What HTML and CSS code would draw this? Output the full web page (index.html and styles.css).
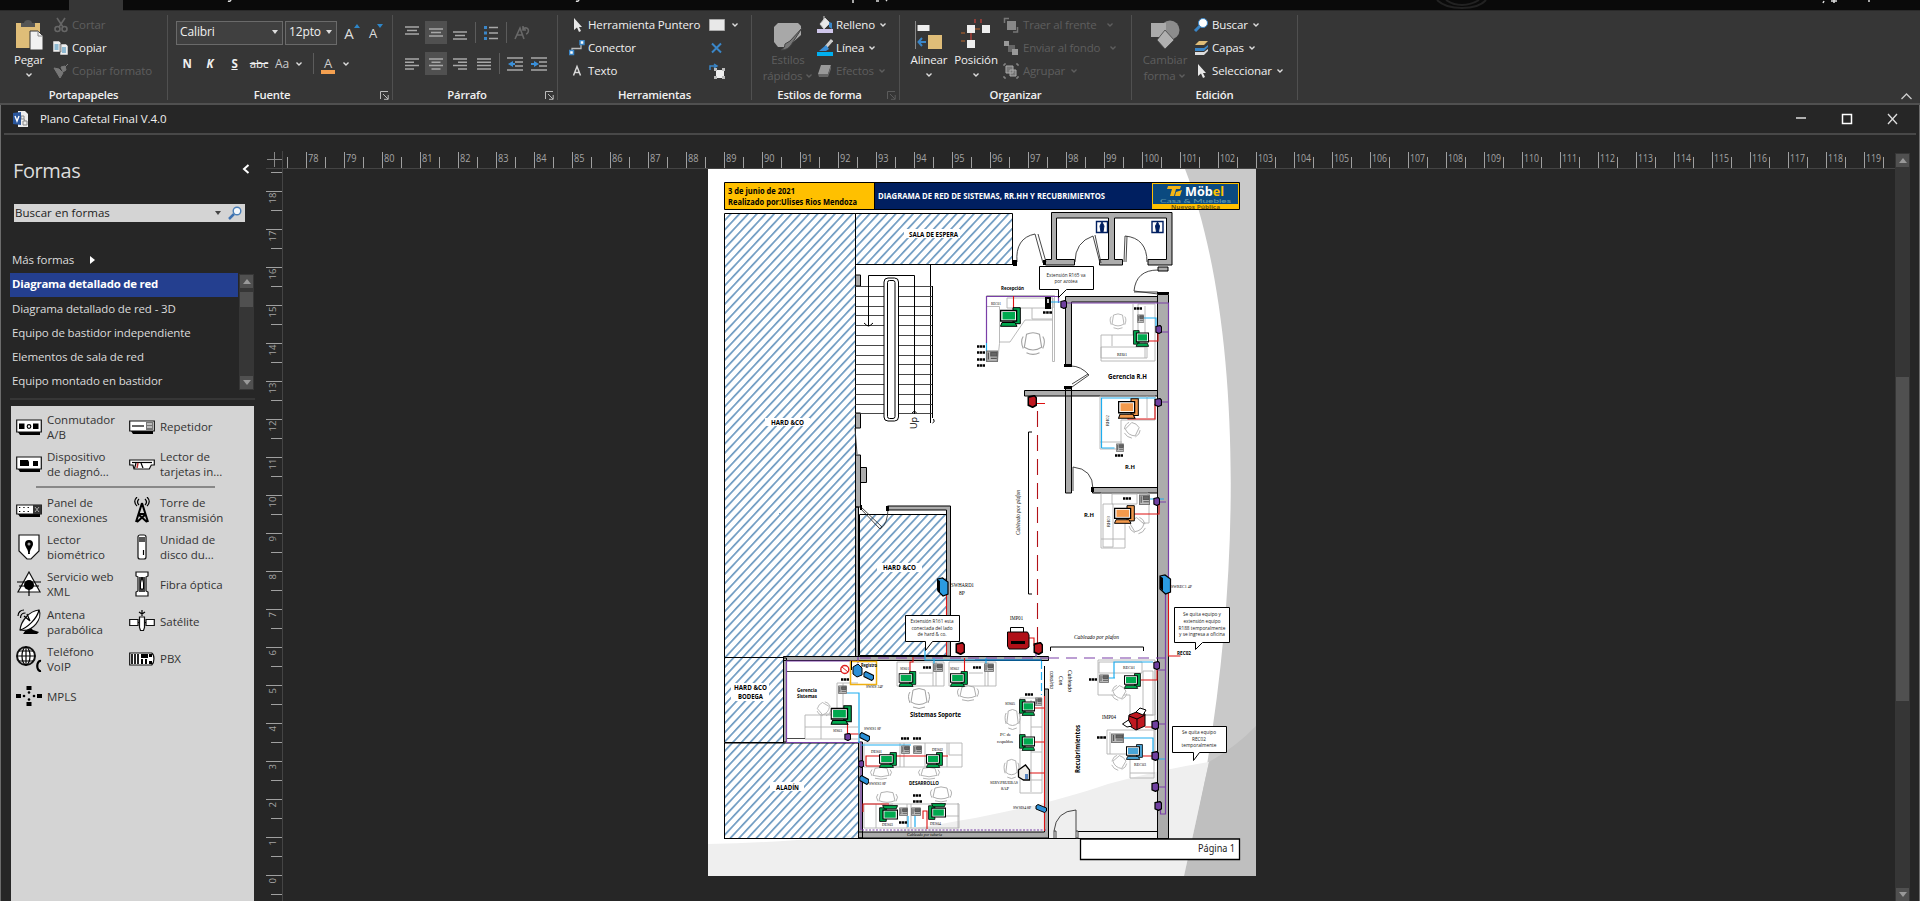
FILE: index.html
```html
<!DOCTYPE html>
<html lang="es">
<head>
<meta charset="utf-8">
<title>Plano Cafetal Final V.4.0</title>
<link rel="stylesheet" href="styles.css">
</head>
<body>
<svg class="defs" width="0" height="0">
  <defs>
    <symbol id="chev" viewBox="0 0 8 8"><path d="M1.5 2.5 4 5 6.500 2.500" fill="none" stroke="currentColor" stroke-width="1.400"/></symbol>
    <symbol id="launch" viewBox="0 0 9 9"><path d="M.5 8V.5H8M3 3l5 5M8.200 4v4.300H4" fill="none" stroke="currentColor"/></symbol>
    <symbol id="cursor" viewBox="0 0 16 16"><path d="M5 1v12l3-2.500 2 4.500 2-1-2-4h3z" fill="#e8e8e8"/></symbol>
  </defs>
</svg>

<div class="app">
  <div class="tabs">
    <div class="tab-on"></div>
    <svg class="tab-bits" width="1797" height="10" viewBox="123 0 1797 10"><path d="M228 1q2 1 3-1M576 1q2 1 3-1M853 0v3M876 1h3M886 0l1 1M1823 3l1-2M1834 0v3M1831 1h6M1869 0v2" stroke="#ddd" stroke-width="1.500" fill="none"/><path d="M1437 0q8 8 25 8t24-8M1446 0q7 5 16 5t17-5" stroke="#222" stroke-width="2" fill="none"/></svg>
  </div>

  <div class="ribbon">
    <section class="group g-clip">
      <div class="body">
        <div class="big">
          <svg width="30" height="34" viewBox="0 0 30 34"><path d="M2 5h24v25H2z" fill="#dfbd78"/><path d="M7 9V5h3c0-4 8-4 8 0h3v4z" fill="#555"/><path d="M16 13h8l5 5v14H16z" fill="#f1f1f1" stroke="#363636"/><path d="M24 13v5h5" fill="none" stroke="#888"/></svg>
          <span>Pegar</span><svg class="chev"><use href="#chev"/></svg>
        </div>
        <div class="rows">
          <div class="row off"><svg width="16" height="16" viewBox="0 0 16 16" fill="none" stroke="#666" stroke-width="1.600"><path d="M4 1l6 9M12 1 6 10"/><circle cx="4.500" cy="12" r="2.500"/><circle cx="11.500" cy="12" r="2.500"/></svg><span>Cortar</span></div>
          <div class="row"><svg width="16" height="16" viewBox="0 0 16 16"><path d="M0 1h6l2 2v9H0zM7 4h6l2 2v9H7z" fill="#eee" stroke="#363636" stroke-width=".5"/><path d="M1.500 5h4M1.500 7h4M1.500 9h4M9 8h4M9 10h4M9 12h4" stroke="#2e86b8"/></svg><span>Copiar</span></div>
          <div class="row off"><svg width="16" height="16" viewBox="0 0 16 16"><path d="M1 5l5 1 4 4-3 5zM8 4l4-1 1 4-3 2zM12 4l3-3" fill="#777" stroke="#777"/></svg><span>Copiar formato</span></div>
        </div>
      </div>
      <div class="label"><span>Portapapeles</span></div>
    </section>

    <section class="group g-font">
      <div class="body tools">
        <div class="tool-row">
          <div class="combo c1"><span>Calibri</span><i></i></div>
          <div class="combo c2"><span>12pto</span><i></i></div>
          <div class="cell w26 fa">A<svg width="6" height="5" viewBox="0 0 6 5"><path d="M0 4l3-4 3 4z" fill="#2e86c8"/></svg></div>
          <div class="cell w22 fb">A<svg width="6" height="5" viewBox="0 0 6 5"><path d="M0 0h6l-3 4z" fill="#2e86c8"/></svg></div>
        </div>
        <div class="tool-row">
          <div class="cell w22"><b>N</b></div><div class="cell w24"><b><em>K</em></b></div><div class="cell w25"><b><u>S</u></b></div>
          <div class="cell w24"><s>abc</s></div><div class="cell w22 gr">Aa</div><div class="cell w12"><svg class="chev"><use href="#chev"/></svg></div>
          <div class="cell w16"><div class="vsep"></div></div>
          <div class="cell w14 fcol">A</div><div class="cell w22"><svg class="chev"><use href="#chev"/></svg></div>
        </div>
      </div>
      <div class="label"><span>Fuente</span><svg class="la"><use href="#launch"/></svg></div>
    </section>

    <section class="group g-par">
      <div class="body tools">
        <div class="tool-row">
          <div class="cell w22"><svg width="14" height="14" viewBox="0 0 14 14" class="ln"><path d="M0 1h14M2 4.500h10M0 8h14"/></svg></div>
          <div class="cell w22 sel gap2"><svg width="14" height="14" viewBox="0 0 14 14" class="ln"><path d="M0 3h14M2 6.500h10M0 10h14"/></svg></div>
          <div class="cell w26"><svg width="14" height="14" viewBox="0 0 14 14" class="ln"><path d="M0 6h14M2 9.500h10M0 13h14"/></svg></div>
          <div class="cell w5"><div class="vsep"></div></div>
          <div class="cell w26"><svg width="14" height="16" viewBox="0 0 14 16"><path d="M5 2.500h9M5 8h9M5 13.500h9" stroke="#a8a8a8" stroke-width="1.600"/><path d="M0 1h3v3H0zM0 6.500h3v3H0zM0 12h3v3H0z" fill="#3a86c8"/></svg></div>
          <div class="cell w5"><div class="vsep"></div></div>
          <div class="cell w26"><svg width="16" height="16" viewBox="0 0 16 16" fill="none" stroke="#686868" stroke-width="1.600"><path d="M1 14 6 3l4 11M3 10h6M9 4c6-4 7 4 3 5M9 1v4h3"/></svg></div>
        </div>
        <div class="tool-row">
          <div class="cell w22"><svg width="14" height="12" viewBox="0 0 14 12" class="ln"><path d="M0 1h14M0 4.300h9M0 7.600h14M0 11h9"/></svg></div>
          <div class="cell w22 sel gap2"><svg width="14" height="12" viewBox="0 0 14 12" class="ln"><path d="M0 1h14M2.500 4.300h9M0 7.600h14M2.500 11h9"/></svg></div>
          <div class="cell w26"><svg width="14" height="12" viewBox="0 0 14 12" class="ln"><path d="M0 1h14M5 4.300h9M0 7.600h14M5 11h9"/></svg></div>
          <div class="cell w22"><svg width="14" height="12" viewBox="0 0 14 12" class="ln"><path d="M0 1h14M0 4.300h14M0 7.600h14M0 11h14"/></svg></div>
          <div class="cell w8"><div class="vsep"></div></div>
          <div class="cell w24"><svg width="16" height="14" viewBox="0 0 16 14"><path d="M0 1h16M8 5h8M8 9h8M0 13h16" stroke="#a8a8a8" stroke-width="1.600"/><path d="M6 4v2h2v2H6v2L1 7z" fill="#3a8fd8"/></svg></div>
          <div class="cell w24"><svg width="16" height="14" viewBox="0 0 16 14"><path d="M0 1h16M8 5h8M8 9h8M0 13h16" stroke="#a8a8a8" stroke-width="1.600"/><path d="M3 4v2H0v2h3v2l5-3z" fill="#3a8fd8"/></svg></div>
        </div>
      </div>
      <div class="label"><span>Párrafo</span><svg class="la"><use href="#launch"/></svg></div>
    </section>

    <section class="group g-tools">
      <div class="body">
        <div class="rows r132">
          <div class="row"><svg width="16" height="16"><use href="#cursor"/></svg><span>Herramienta Puntero</span></div>
          <div class="row"><svg width="16" height="16" viewBox="0 0 16 16"><path d="M3 12V8.500h9V4" fill="none" stroke="#bbb" stroke-width="1.300"/><path d="M.5 10.500h4v4h-4zM11 .5h4v4h-4z" fill="#fff" stroke="#3a86c8" stroke-width="1.500"/></svg><span>Conector</span></div>
          <div class="row"><svg width="16" height="16" viewBox="0 0 16 16"><path d="M4.500 12.500 8 3.500l3.500 9M5.800 9.500h4.400" fill="none" stroke="#d8d8d8" stroke-width="1.500"/></svg><span>Texto</span></div>
        </div>
        <div class="rows pick">
          <div class="row"><svg width="16" height="12" viewBox="0 0 16 12"><path d="M.5.500h15v11H.5z" fill="#e8e8e8" stroke="#aaa"/></svg><svg class="chev sp"><use href="#chev"/></svg></div>
          <div class="row"><svg width="16" height="14" viewBox="0 0 16 14"><path d="M3 2.500l9 9M12 2.500l-9 9" stroke="#3a86c8" stroke-width="2"/></svg></div>
          <div class="row"><svg width="16" height="16" viewBox="0 0 16 16"><path d="M1 7V3h6M5 1l3 2-3 2" fill="none" stroke="#3a86c8" stroke-width="1.500"/><path d="M7 7h8v8H7z" fill="#eee"/><path d="M5 5h3v3H5zM13 5h3v3h-3zM5 13h3v3H5zM13 13h3v3h-3z" fill="#bbb"/></svg></div>
        </div>
      </div>
      <div class="label"><span>Herramientas</span></div>
    </section>

    <section class="group g-style">
      <div class="body">
        <div class="big off">
          <svg width="30" height="34" viewBox="0 0 30 34"><path d="M5 5h20l3 3v9L18 26l-6 3H5l-4-5V9z" fill="#a8a8a8"/><path d="M29 10 18 27q-3 5-10 5 5-3 4-6l5-3z" fill="#777" stroke="#444"/></svg>
          <span>Estilos</span><span class="l2">rápidos <svg class="chev"><use href="#chev"/></svg></span>
        </div>
        <div class="rows">
          <div class="row"><svg width="16" height="18" viewBox="0 0 16 18"><path d="M3 8l5-6 5 5-6 6zM7 4V0" fill="#e8e8e8" stroke="#ccc"/><path d="M12 6l3 1v6l-3-2z" fill="#3a86c8"/><path d="M0 13h16v4H0z" fill="#cfc6ea"/></svg><span>Relleno</span><svg class="chev"><use href="#chev"/></svg></div>
          <div class="row"><svg width="16" height="18" viewBox="0 0 16 18"><path d="M15 1 9 8" stroke="#ccc" stroke-width="3"/><path d="M2 12 9 6l3 4-3 2z" fill="#3a8fd8"/><path d="M0 13h16v4H0z" fill="#00b0f0"/></svg><span>Línea</span><svg class="chev"><use href="#chev"/></svg></div>
          <div class="row off"><svg width="16" height="16" viewBox="0 0 16 16"><path d="M4 2h10l-3 9H1z" fill="#999"/><path d="M14 2v4l-3 8v-3zM1 11h10v3H2z" fill="#666"/></svg><span>Efectos</span><svg class="chev"><use href="#chev"/></svg></div>
        </div>
      </div>
      <div class="label"><span>Estilos de forma</span><svg class="la off"><use href="#launch"/></svg></div>
    </section>

    <section class="group g-org">
      <div class="body">
        <div class="big b44">
          <svg width="30" height="34" viewBox="0 0 30 34"><path d="M1.500 3v28" stroke="#888"/><path d="M3.500 7h12v6h-12z" fill="#eee"/><path d="M14 17h14v14H14z" fill="#dfbd78"/><path d="M12 24H6M8 20l-3.500 4L8 28" stroke="#3a86c8" stroke-width="2" fill="none"/></svg>
          <span>Alinear</span><svg class="chev"><use href="#chev"/></svg>
        </div>
        <div class="big b50">
          <svg width="30" height="34" viewBox="0 0 30 34"><path d="M14 1v4M20 1v4M10 15v8" stroke="#e0443c"/><path d="M13 11h6M0 15h4M0 23h4" stroke="#b8642c"/><path d="M6 7h8v8H6zM21 7h8v8h-8zM6 22h8v8H6z" fill="#eee"/></svg>
          <span>Posición</span><svg class="chev"><use href="#chev"/></svg>
        </div>
        <div class="rows g4">
          <div class="row off"><svg width="16" height="16" viewBox="0 0 16 16"><path d="M4 4h9v9H4z" fill="#888"/><path d="M1.500 6V1.500H6M10 15h4.500v-5" fill="none" stroke="#777" stroke-width="1.500"/></svg><span>Traer al frente</span><svg class="chev far"><use href="#chev"/></svg></div>
          <div class="row off"><svg width="16" height="16" viewBox="0 0 16 16"><path d="M5 5h7v7H5z" fill="#666"/><path d="M1 1h5v5H1zM9 9h6v6H9z" fill="#999"/></svg><span>Enviar al fondo</span><svg class="chev far"><use href="#chev"/></svg></div>
          <div class="row off"><svg width="16" height="16" viewBox="0 0 16 16"><path d="M3 3h7v7H3zM7 7h6v6H7z" fill="#777" stroke="#aaa"/><path d="M1 3V1h2M13 1h2v2M15 13v2h-2M3 15H1v-2" fill="none" stroke="#999"/></svg><span>Agrupar</span><svg class="chev"><use href="#chev"/></svg></div>
        </div>
      </div>
      <div class="label"><span>Organizar</span></div>
    </section>

    <section class="group g-edit">
      <div class="body">
        <div class="big off">
          <svg width="30" height="34" viewBox="0 0 30 34"><circle cx="20" cy="12" r="9.500" fill="#8c8c8c"/><path d="M1 5h15v14H1z" fill="#aaa"/><path d="M15 12l9 10-9 9-8-9z" fill="#b0b0b0" stroke="#444" stroke-width=".8"/></svg>
          <span>Cambiar</span><span class="l2">forma <svg class="chev"><use href="#chev"/></svg></span>
        </div>
        <div class="rows">
          <div class="row"><svg width="16" height="16" viewBox="0 0 16 16"><path d="M2 14l5-5" stroke="#3a86c8" stroke-width="3"/><circle cx="10" cy="6" r="4.500" fill="#fff" stroke="#3a86c8"/></svg><span>Buscar</span><svg class="chev"><use href="#chev"/></svg></div>
          <div class="row"><svg width="16" height="16" viewBox="0 0 16 16"><path d="M6 1h9l-4 4H2z" fill="#dfbd78"/><path d="M2 8h9l4-3v2l-4 4H2z" fill="#3a86c8"/><path d="M2 12h9l4-3v2l-4 4H2z" fill="#ddd"/></svg><span>Capas</span><svg class="chev"><use href="#chev"/></svg></div>
          <div class="row"><svg width="16" height="16"><use href="#cursor"/></svg><span>Seleccionar</span><svg class="chev"><use href="#chev"/></svg></div>
        </div>
      </div>
      <div class="label"><span>Edición</span></div>
    </section>
    <svg class="collapse" width="11" height="7" viewBox="0 0 11 7"><path d="M.5 6 5.500 1l5 5" fill="none" stroke="#ccc" stroke-width="1.300"/></svg>
  </div>

  <div class="doc">
    <div class="titlebar">
      <svg width="16" height="16" viewBox="0 0 16 16"><path d="M5 0h7l3 3v13H5z" fill="#eee"/><path d="M8 5h3v3H8zM10 10h4v4h-4zM11 8l1 2" fill="none" stroke="#888"/><path d="M0 2l8-1v13l-8-1z" fill="#2a569c"/><path d="M2 5l2 5 2-5" fill="none" stroke="#fff" stroke-width="1.400"/></svg>
      <span>Plano Cafetal Final V.4.0</span>
      <svg class="winbtns" width="104" height="14" viewBox="0 0 104 14" fill="none" stroke="#ddd" stroke-width="1.300"><path d="M1 6h10M93 2l9 10M102 2l-9 10"/><path d="M47.500 2.500h9v9h-9z" stroke="#fff" stroke-width="1.500"/></svg>
    </div>

    <div class="main">
      <aside class="side">
        <div class="side-head"><h1>Formas</h1><svg width="8" height="10" viewBox="0 0 8 10"><path d="M6.500 1 2 5l4.500 4" fill="none" stroke="#fff" stroke-width="2"/></svg></div>
        <div class="search"><span>Buscar en formas</span><i></i><svg width="14" height="14" viewBox="0 0 14 14"><path d="M1 13l5-5" stroke="#3f72b0" stroke-width="2.500"/><circle cx="9" cy="5" r="3.800" fill="#f4f8fc" stroke="#4a7fb8" stroke-width="1.400"/></svg></div>
        <div class="more">Más formas<svg width="5" height="8" viewBox="0 0 5 8"><path d="M0 0l5 4-5 4z" fill="#fff"/></svg></div>
        <div class="stencils">
          <ul>
            <li class="on">Diagrama detallado de red</li><li>Diagrama detallado de red - 3D</li><li>Equipo de bastidor independiente</li><li>Elementos de sala de red</li><li>Equipo montado en bastidor</li>
          </ul>
          <div class="sbar small"><b class="up"></b><em></em><b class="dn"></b></div>
        </div>
        <div class="shapes">
          <div class="shape-grid top">
            <div class="shape"><svg viewBox="0 0 26 26"><path d="M2 18h22v3H4z"/><path d="M.7 6h24.600v12H.7z" class="w"/><path d="M3 9.500h5.500v5.500H3zM17 9.500h5.500v5.500H17z"/><circle cx="13" cy="12.500" r="1.800" class="n"/></svg><span>Conmutador<br>A/B</span></div>
            <div class="shape"><svg viewBox="0 0 26 26"><path d="M2 17h22v3H4z"/><path d="M.7 7h24.600v10H.7z" class="w"/><path d="M3 12h12" class="n"/><path d="M17 8h7v8h-7z" fill="#777"/><path d="M18 10h5M18 13h5" stroke="#fff"/></svg><span>Repetidor</span></div>
            <div class="shape"><svg viewBox="0 0 26 26"><path d="M2 18h22v3H4z"/><path d="M.7 6h24.600v12H.7z" class="w"/><path d="M4 9h8l1 2v4H4zM17 10h5v5h-5z"/></svg><span>Dispositivo<br>de diagnó...</span></div>
            <div class="shape"><svg viewBox="0 0 26 26"><path d="M.7 9h24.600v5h-3l-2 4H5l-1-4H.7z" class="w"/><path d="M3 11.500h20" class="n"/><path d="M7 12l-1.500 5.500M12 12l2 5" class="n"/><path d="M9 12l-1 5" stroke="#b33" stroke-width="1.500"/></svg><span>Lector de<br>tarjetas in...</span></div>
          </div>
          <hr>
          <div class="shape-grid">
            <div class="shape"><svg viewBox="0 0 26 26"><path d="M2 17h22v3H4z"/><path d="M.7 8h24.600v9H.7z" class="w"/><path d="M3 10.500h12M3 14.500h12" class="n" stroke-dasharray="1.300 3"/><path d="M17 8h8v9h-8z" fill="#333"/><path d="M19 10l4 5M23 10l-4 5" stroke="#aaa"/></svg><span>Panel de<br>conexiones</span></div>
            <div class="shape"><svg viewBox="0 0 26 26"><path d="M13 6 7 25M13 6l6 19M9 17h8M8 25l9-8M18 25l-9-8" fill="none" stroke="#000" stroke-width="2"/><path d="M10 8c-2-2-2-4 0-6M16 8c2-2 2-4 0-6M8 9C5 6 5 3 8 0M18 9c3-3 3-6 0-9" class="n"/></svg><span>Torre de<br>transmisión</span></div>
            <div class="shape"><svg viewBox="0 0 26 26"><path d="M3 1h20v16L15 25h-4L3 17z" class="w"/><path d="M13 6a4 4 0 0 1 4 4c0 3-4 6-3 10h-2c1-4-3-7-3-10a4 4 0 0 1 4-4z"/><circle cx="13" cy="10" r="1.500" fill="#999"/></svg><span>Lector<br>biométrico</span></div>
            <div class="shape"><svg viewBox="0 0 26 26"><rect x="9" y="1" width="8" height="24" rx="2" class="w"/><path d="M10 3h6v5h-6z" fill="#555"/><path d="M14.500 16v5" class="n"/></svg><span>Unidad de<br>disco du...</span></div>
            <div class="shape"><svg viewBox="0 0 26 26"><path d="M13 1 24 21H2z" class="w"/><circle cx="13" cy="14" r="5"/><path d="M1 11h24M3 15h20M13 18v7" class="n"/></svg><span>Servicio web<br>XML</span></div>
            <div class="shape"><svg viewBox="0 0 26 26"><path d="M7 1h12v4l-2 1v14l2 1v4H7v-4l2-1V6L7 5z" class="w"/><path d="M10 6h6v15h-6z" fill="#444"/><path d="M13 6l1.500 6v6H11.500v-6z" fill="#fff" stroke="#000"/></svg><span>Fibra óptica</span></div>
            <div class="shape"><svg viewBox="0 0 26 26"><path d="M7 25h14l2-2-6-2-3-3-5 4z"/><path d="M23 1c4 8-6 23-19 20 1-9 9-19 19-20z" class="w"/><path d="M4 21C11 19 21 10 23 1M14 12 8 7M14 12 11 5M2 7c0-4 3-6 6-6M4.500 9c0-3 2-5 5-5" class="n"/></svg><span>Antena<br>parabólica</span></div>
            <div class="shape"><svg viewBox="0 0 26 26"><path d="M.7 10.500h8.300v6H.7zM17 10.500h8.300v6H17z" class="w"/><path d="M9 13.500h8" class="n"/><path d="M10.500 8h5v10.500l-1 3h-3l-1-3z" class="w"/><path d="M10 3l3 2 3-2M13 1v6" class="n"/></svg><span>Satélite</span></div>
            <div class="shape"><svg viewBox="0 0 26 26"><circle cx="10" cy="10" r="9" class="w thick"/><ellipse cx="10" cy="10" rx="4" ry="9" class="n"/><path d="M1 10h18M10 1v18M3 5h14M3 15h14" class="n"/><path d="M25 15c-5-1-5 11 0 10" fill="none" stroke="#000" stroke-width="2.200"/></svg><span>Teléfono<br>VoIP</span></div>
            <div class="shape"><svg viewBox="0 0 26 26"><path d="M.7 7h22c3 2 3 9 0 12h-22z" class="w"/><path d="M3 8v10M6 8v10M9 8v10" stroke="#000" stroke-width="1.700"/><path d="M12 8h7v4h-7zM12 13h2v5h-2zM16 13h2v5h-2zM20 8h3v3h-3zM20 15h3v3h-3z"/></svg><span>PBX</span></div>
            <div class="shape"><svg viewBox="0 0 26 26"><path d="M10.500 3h5v4h-5zM10.500 19h5v4h-5zM0 11h5v4H0zM21 11h5v4h-5z"/><circle cx="13" cy="9.500" r="1.300"/><circle cx="13" cy="16.500" r="1.300"/><circle cx="8" cy="13" r="1.300"/><circle cx="18" cy="13" r="1.300"/></svg><span>MPLS</span></div>
          </div>
        </div>
      </aside>

      <div class="work">
        <svg class="corner" width="17" height="18" viewBox="266 151 17 18"><path d="M274.500 152v15M267 159.500h15" stroke="#888"/><path d="M282.500 151v18M266 168.500h17" stroke="#444"/></svg>
        <svg class="hruler" id="hruler" width="1612" height="18" viewBox="283 151 1612 18"></svg>
        <svg class="vruler" id="vruler" width="17" height="732" viewBox="266 169 17 732"></svg>
        <div class="canvas">
<svg class="page" id="plan" width="548" height="707" viewBox="708 169 548 707">
  <defs>
    <pattern id="hatch" width="6.350" height="6.350" patternUnits="userSpaceOnUse" patternTransform="rotate(43)"><path d="M0 0h1.700v6.350H0z" fill="#6d9ac1"/></pattern>
    <symbol id="pc" viewBox="0 0 21 20" preserveAspectRatio="none"><path d="M13 .7h7.300v16H13z" stroke="#000"/><path d="M.6 3.500h16v10.500H.6z" fill="#fff" stroke="#000" stroke-width="1.300"/><path d="M2.500 5h12.500v7.500H2.500z"/><path d="M2 15.500h13l2 3.800H.5z" stroke="#000"/></symbol>
    <symbol id="soc" viewBox="0 0 8 9" preserveAspectRatio="none"><path d="M1 1.500 6 .5l1.500 1.500v5l-3 1.500L1 7z" stroke="#000" stroke-width="1.200"/></symbol>
    <symbol id="ap" viewBox="0 0 12 9" preserveAspectRatio="none"><path d="M1 2l2-1.500 8.500 3.500v3l-2 1.500L1 5z" fill="#2b8fd6" stroke="#000"/></symbol>
    <symbol id="chair" viewBox="0 0 24 24" preserveAspectRatio="none"><path d="M6 4q6-3 12 0l2 12q-8 5-16 0zM3 6q-3 4 0 11M21 6q3 4 0 11M6 21q6 3 12 0" fill="#fff" stroke="#a2a2a2" stroke-width="1"/></symbol>
    <symbol id="tel" viewBox="0 0 10 10" preserveAspectRatio="none"><path d="M.5 1h9v8.500h-9z" fill="#bbb" stroke="#777"/><path d="M4 2h5v3H4zM2 2v6M4 7h5" fill="#666" stroke="#555"/></symbol>
    <symbol id="tag" viewBox="0 0 8 3" preserveAspectRatio="none"><path d="M0 .3h2.300v2.400H0zM2.800.3h2.300v2.400H2.800zM5.600.3H8v2.400H5.600z"/></symbol>
  </defs>
  <path d="M708 169h548v707H708z" fill="#fff"/>
  <path d="M1185 169c60 155 62 440 0 707h71V169z" fill="#c9c9c9"/>
  <path d="M708 844c160-3 300-26 400-60q50-14 101-22l-25 114H708z" fill="#efefef"/>
  <path d="M1209 762q28-16 47-36v150h-72z" fill="#bfbfbf"/>

  <path d="M724.500 182.500h150v27h-150z" fill="#ffc000"/><path d="M874.500 182.500h277.500v27H874.500z" fill="#001f60"/><path d="M1152 182.500h87v27h-87z" fill="#ffc000"/><path d="M1153 184h85v20h-85z" fill="#0b4a80"/>
  <path d="M724.500 182.500h515v27h-515zM874.500 183v26" class="k0"/>
  <g class="b"><text x="728" y="194" font-size="9" textLength="67">3 de junio de 2021</text><text x="728" y="204.500" font-size="9" textLength="129">Realizado por:Ulises Rios Mendoza</text>
  <text x="878" y="199" font-size="9" fill="#fff" textLength="227">DIAGRAMA DE RED DE SISTEMAS, RR.HH Y RECUBRIMIENTOS</text></g>
  <path d="M1168 186h13l-1 3h-4l-2 7h-4l2-7h-5zM1176 192l6-2-2 6h-5z" fill="#f5b515"/>
  <text x="1185" y="195.500" font-size="11.500" textLength="39" class="b" fill="#fff">Möb<tspan fill="#ffc000">el</tspan></text>
  <text x="1160" y="203" font-size="6.500" textLength="71" class="s" fill="#69a0b0">Casa &amp; Muebles</text>
  <text x="1171" y="208.800" font-size="5" textLength="49" class="b" fill="#6a5210">Nuevos Pública</text>

  <g fill="url(#hatch)" stroke="#000"><path d="M724.500 213.500h131v444h-131zM855.500 213.500h157v51h-157zM859.500 514.500h87v141h-87zM724.500 657.500h59v85h-59zM724.500 743h134v95.500h-134z"/></g>
  <g fill="#fff"><path d="M904 229h56v9h-56zM765 418h45v8h-45zM877 563h45v9h-45zM731 683h38v18h-38zM770 782h34v9h-34z"/></g>
  <g class="b" font-size="6.500"><text x="909" y="236.500" textLength="49">SALA DE ESPERA</text><text x="771" y="425" textLength="33">HARD &amp;CO</text><text x="883" y="570" textLength="33">HARD &amp;CO</text><text x="734" y="690" textLength="33">HARD &amp;CO</text><text x="738" y="699" textLength="25">BODEGA</text><text x="776" y="790" textLength="23">ALADÍN</text></g>

  <!-- muros -->
  <g fill="#acacac" stroke="#000">
    <path d="M1051.500 212.500h120.500V265h-24v-5.500h18.500V218h-52v41.500h8v5.500h-23v-5.500h9V218h-52v41.500h18V265h-29v-5.500h6z"/>
    <path d="M1157.500 294.500h11v544h-11zM1065.500 296.500h92v5.500h-86v64h-6zM1065.500 387.500h6v105.500h-6zM1024.500 390.500h133v5.500h-133zM1092.500 487.500h65v5.500h-65zM1158 267h10v4h-10z"/>
    <path d="M855.500 275h5v11h-5zM855.500 413h5v15h-5zM855.500 455h5v52h-5zM860.500 467.500h6v15h-6zM855.500 507h3v150h-3zM887.500 506h63v150h-4V510h-59z"/>
    <path d="M783.500 656.500h265v4h-265zM1044.500 689h4v149h-190v-6h186zM783.500 658h3v84h-3zM858.500 742h4v96h-4z"/>
  </g>
  <g class="k"><path d="M724 838.500h444.500M1078 831.500h79M855 264.500h160M930.500 265v158M932.500 286v132M932.500 423q3-1 1-4M1044.500 666v23M1012.500 214v50"/></g>
  <!-- puertas -->
  <g class="d"><path d="M1017 262q-2-24 18-28l8 29 3-1-8-28M1075 262q0-20 18-26l7 27M1095 235l6 28M1124 262l1-26q22 2 22 26M1127 236l-1 26M1158 270q-22 0-24 21l24 3M1134 292l24 0M1071 366q10 0 18 9l-17 12M1088 374l-16 10M1073 467v24M1073 467q20 2 20 22M860 508l20 21 2-2-21-20M888 508q0 16-8 21M855 428l2 26M1054 838v-7h2v7M1054 831q2-20 22-21v21h2v7h-2v-7"/></g>
  <g fill="#000"><path d="M1013 260h4v6h-4zM1043 260h3v5h-3zM1064 364h8v3h-8zM1064 386h8v3h-8zM1157 292h12v2h-12zM1091 487h3v5h-3zM886 506h3v5h-3zM860 505h2v5h-2z"/></g>
  <!-- escalera -->
  <g class="d"><path d="M855 286.500h77M855 296.500h77M855 306.500h77M855 315.500h77M855 325.500h77M855 335.500h77M855 345.500h77M855 355.500h77M855 364.500h77M855 374.500h77M855 384.500h77M855 394.500h77M855 404.500h77M855 413.500h77"/></g>
  <rect x="884" y="278" width="14.500" height="143" rx="4" fill="#fff" class="k"/><rect x="887.500" y="280.500" width="7.500" height="138" rx="2" fill="#fff" class="k"/>
  <path d="M868.500 326V275.500h46V414M864 323q3 3 4.500 3t4.500-3M912 413l2.500-2 2 2" class="k"/>
  <text transform="translate(917 429) rotate(-90)" font-size="9" textLength="12">Up</text>

  <!-- sanitarios -->
  <path d="M1096.500 221.500h11v11h-11zM1152 221.500h11v11h-11z" fill="#fff" stroke="#001f60" stroke-width="1.400"/><path d="M1102 222l2 4-1 6h-2l-1-6zM1157.500 222l2 4-1 6h-2l-1-6z" fill="#001f60" stroke="#001f60"/>

  <!-- mobiliario -->
  <g class="f">
    <path d="M986.500 295.500h68v66h-2v-64M986.500 306.500h13v37l-2 18h-11zM1007 298h46v10h-46zM999 342h11l15-22h28M1032 308v11h20"/>
    <path d="M1101 335h37v-31h17v57h-54zM1101 347h46v11h-46zM1133 304v31M1145 306v52M1112 335v11"/>
    <path d="M1100 396h55v24h-34v29h-21zM1100 442h22M1147 396v22"/>
    <path d="M1101 493h47v12M1101 493v55h24v-25h24v-30M1112 494h25v10h-25zM1103 504h10v43h-10zM1101 539h24"/>
    <path d="M858 683h-21v31h-16v25h37M805 715h33M805 715v24h16M805 727h53M843 683v31"/>
    <path d="M897 662h47v24h-47zM949 662h47v24h-47zM933 662v24M985 662v24M919 673h14M969 673h14M936 662v24M988 662v24"/>
    <path d="M864 743h98v24h-98zM900 743v24M904 743v24M925 743v24M949 743v12h13M947 743v24"/>
    <path d="M864 804h95v24h-95zM876 804v24M907 804v24M911 804v24M930 816h29M958 803v25"/>
    <path d="M1020 698v95h22v-95zM1031 700v92M1031 727h11M1031 752h11M1031 780h11"/>
    <path d="M1098 660h57v55h-25v-20h-32zM1099 662h43v11h-43zM1143 671h10v44h-10zM1155 663v98"/>
    <path d="M1107 730h47v48h-24v-24h-23zM1110 732v22M1130 773h25"/>
  </g>
  <use href="#chair" x="1020" y="330" width="26" height="26"/><use href="#chair" x="1109" y="312" width="18" height="18"/><use href="#chair" x="1123" y="421" width="18" height="18" transform="rotate(35 1132 430)"/><use href="#chair" x="1128" y="516" width="18" height="19" transform="rotate(-40 1137 525)"/>
  <use href="#chair" x="816" y="701" width="16" height="16" transform="rotate(-50 824 709)"/><use href="#chair" x="907" y="686" width="24" height="24"/><use href="#chair" x="956" y="684" width="24" height="18"/><use href="#chair" x="869" y="766" width="24" height="14"/><use href="#chair" x="917" y="766" width="24" height="14"/><use href="#chair" x="875" y="790" width="24" height="16"/><use href="#chair" x="929" y="785" width="24" height="18"/>
  <use href="#chair" x="1004" y="707" width="17" height="24"/><use href="#chair" x="1003" y="757" width="17" height="23"/><use href="#chair" x="1111" y="684" width="17" height="17" transform="rotate(40 1119 692)"/><use href="#chair" x="1111" y="754" width="17" height="17" transform="rotate(40 1119 762)"/>

  <!-- cableado -->
  <g fill="none" stroke="#7a3fa8" stroke-width="1.200"><path d="M986.500 343V296.500h72V303M1062 303h106.500V580M1168 332h-11M1168 402h-11M1166 502h-9M1165.500 594V814h-5v-8M1157 670h8M1157 724h8M1157 787h8M786.500 742V661h70M786 742.500h75V830"/><path d="M862 830h184" stroke-dasharray="2 1.500"/><path d="M860 658h188M1048 658h117" stroke-dasharray="11 7"/><path d="M1036 652v5M858 657v6"/></g>
  <g fill="none" stroke="#1eaef0" stroke-width="1.200"><path d="M986.500 343v18M1051 302h9M1144 318h12v8M1101.500 448v-50h54M1101.500 448h13M1150 499h14M847 693h12v50M861 745h50M925 650v10h116M1114 678v-16h39M1109 678h6M1122 738h31v16M1157 759h8M908 816v11M915 816v11M934 658v8M986 658v8"/><path d="M1041.500 661v34" stroke-dasharray="8 3"/><path d="M975 660h67" stroke="#005ca8"/></g>
  <g fill="none" stroke="#dd1111" stroke-width="1.100"><path d="M1013.500 296v14M1147 341h11v-12M1128 414v5h27v-15M1134 514h25v-14M1037 403.500h8M1168.500 580v76h12M946.500 595v60M913 657v5h-3v12M964.500 658v18M847.500 724v10h11M866 766V756h82M866 766h14M863 812v-8h26M927 829V811h-4v8M1034 708h10M1034 742h10M1030 773h14M1044.500 696v135M1141 680h16v-16M1145 727h8M1143 756h9M1027 638h7v8"/><path d="M1037.500 411v232" stroke="#b31218" stroke-dasharray="16 8"/></g>
  <path d="M1032 432h-3.500v162h3.500M1050.500 651v-4h93v4" class="k"/>
  <path d="M787 671.500h55M787 738.500h18" class="d"/>

  <g fill="#00a94f">
    <use href="#pc" x="1000" y="307" width="21" height="20"/><use href="#pc" x="-1149" y="330" width="16" height="17" transform="scale(-1 1)"/><use href="#pc" x="830.500" y="705" width="21.500" height="20"/><use href="#pc" x="898.500" y="671" width="18" height="16"/><use href="#pc" x="950" y="671" width="18" height="16"/><use href="#pc" x="879" y="752" width="18" height="16"/><use href="#pc" x="926" y="752" width="17" height="16"/>
    <use href="#pc" x="-898" y="-822" width="19" height="17" transform="scale(-1 -1)"/><use href="#pc" x="-946" y="-820" width="18" height="17" transform="scale(-1 -1)"/><use href="#pc" x="-1035" y="699" width="16" height="17" transform="scale(-1 1)"/><use href="#pc" x="-1035" y="734" width="16" height="17" transform="scale(-1 1)"/><use href="#pc" x="1124" y="673" width="17" height="16"/>
  </g>
  <g fill="#f49a4c"><use href="#pc" x="1118" y="398" width="21" height="21"/><use href="#pc" x="1114" y="505" width="21" height="19"/></g>
  <use href="#pc" x="1126" y="744" width="17" height="16" fill="#4aa5d8"/>
  <path d="M1018.500 770l7-5 4 5v10h-6l-5-3z" fill="#f0eeea" stroke="#000" stroke-width="1.300"/><path d="M1025 774h3v5h-3z" fill="#5a86c0"/>
  <g fill="#7040a0"><use href="#soc" x="1060" y="300" width="7" height="9"/><use href="#soc" x="1155" y="325" width="7" height="9"/><use href="#soc" x="1154" y="398" width="8" height="9"/><use href="#soc" x="1153" y="497" width="7" height="9"/><use href="#soc" x="844" y="733" width="7" height="8"/><use href="#soc" x="858" y="760" width="6" height="8"/><use href="#soc" x="1153" y="661" width="7" height="9"/><use href="#soc" x="1151" y="720" width="8" height="10"/><use href="#soc" x="1151" y="751" width="8" height="10"/><use href="#soc" x="1151" y="782" width="8" height="10"/><use href="#soc" x="1154" y="801" width="8" height="10"/></g>
  <g fill="#c01820"><use href="#soc" x="1027" y="395" width="10" height="13"/><use href="#soc" x="955" y="642" width="10" height="13"/><use href="#soc" x="1033" y="642" width="10" height="13"/></g>
  <path d="M1010.500 632v-4.500h13v4.500" fill="#fff" stroke="#000"/><path d="M1007.500 632h20l1.500 3v12l-3 2h-17l-1.500-3z" fill="#b01018" stroke="#000"/><path d="M1011 641h14v3h-14z"/>
  <path d="M1129 715l10-4 6 3v12l-9 4-8-5z" fill="#c01820" stroke="#000"/><path d="M1129 716l8 3 8-4M1137 719v11" fill="none" stroke="#000"/><path d="M1122.500 724l6-4 3.500 6-5 1zM1136 712l4-4 6 2-3 5z" fill="#fff" stroke="#000"/>
  <path d="M937.500 579l5-1 5.500 4v12l-5 2-5-5zM1160 576l5-1 5.500 4v13l-5 2-5.500-5z" fill="#2b9be0" stroke="#000" stroke-width="1.200"/><path d="M937 579l3 2v12l-3-3zM1160 576l3 2v13l-3-3z"/>
  <path d="M850.500 661.500h26v23h-26z" fill="none" stroke="#f0b010" stroke-width="1.500"/><path d="M853 667l5-3 4 4v7l-5 2-4-3z" fill="#2b8fd6" stroke="#000"/><path d="M851.500 661v9" class="k"/>
  <use href="#ap" x="863" y="671" width="11" height="10"/><use href="#ap" x="859" y="732" width="11" height="10"/><use href="#ap" x="859" y="775" width="10" height="10"/><use href="#ap" x="1035" y="804" width="12" height="9"/>
  <circle cx="844.800" cy="669.500" r="4" fill="none" stroke="#e02020" stroke-width="1.400"/><path d="M842 667l6 5" stroke="#e02020"/>

  <use href="#tel" x="986" y="350" width="12" height="12"/><use href="#tel" x="1137" y="314" width="7" height="9"/><use href="#tel" x="1116" y="443" width="8" height="9"/><use href="#tel" x="1139" y="494" width="11" height="11"/><use href="#tel" x="838" y="685" width="9" height="9"/><use href="#tel" x="933" y="663" width="10" height="9"/><use href="#tel" x="984" y="663" width="10" height="9"/><use href="#tel" x="901" y="745" width="9" height="9"/><use href="#tel" x="913" y="745" width="9" height="9"/><use href="#tel" x="899" y="807" width="9" height="9"/><use href="#tel" x="911" y="807" width="10" height="9"/><use href="#tel" x="1035" y="697" width="7" height="9"/><use href="#tel" x="1099" y="674" width="10" height="9"/><use href="#tel" x="1111" y="733" width="13" height="10"/>
  <path d="M1045 297h6v12h-6z"/><path d="M1047 299h2v4h-2z" fill="#ccc"/>
  <g fill="#000"><use href="#tag" x="977" y="345" width="8" height="3"/><use href="#tag" x="977" y="351" width="8" height="3"/><use href="#tag" x="977" y="358" width="8" height="3"/><use href="#tag" x="977" y="364" width="8" height="3"/><use href="#tag" x="1043" y="311" width="9" height="3"/><use href="#tag" x="1134" y="307" width="8" height="3"/><use href="#tag" x="1115" y="454" width="8" height="3"/><use href="#tag" x="1123" y="497" width="8" height="3"/><use href="#tag" x="841" y="678" width="8" height="3"/><use href="#tag" x="923" y="666" width="8" height="3"/><use href="#tag" x="973" y="666" width="8" height="3"/><use href="#tag" x="901" y="737" width="8" height="3"/><use href="#tag" x="913" y="737" width="8" height="3"/><use href="#tag" x="913" y="794" width="8" height="3"/><use href="#tag" x="913" y="800" width="9" height="3"/><use href="#tag" x="899" y="821" width="8" height="3"/><use href="#tag" x="1025" y="693" width="8" height="3"/><use href="#tag" x="1089" y="678" width="8" height="3"/><use href="#tag" x="1097" y="736" width="9" height="3"/></g>

  <g class="b" font-size="5.500"><text x="1001" y="290" font-size="5" textLength="23">Recepción</text><text x="1108" y="378.500" font-size="6.500" textLength="39">Gerencia R.H</text><text x="1125" y="468.500" font-size="6" textLength="10">R.H</text><text x="1084" y="516.500" font-size="6" textLength="10">R.H</text><text x="910" y="717" font-size="6.500" textLength="51">Sistemas Soporte</text><text x="909" y="785" font-size="5" textLength="30">DESARROLLO</text><text x="797" y="692" font-size="4.500" textLength="20">Gerencia</text><text x="797" y="698" font-size="4.500" textLength="20">Sistemas</text><text x="1177" y="655" font-size="5" textLength="14">REC02</text><text x="861" y="667" font-size="4.500" textLength="16">Registro</text><text transform="translate(1080 773) rotate(-90)" font-size="6.500" textLength="48">Recubrimientos</text></g>
  <g class="i"><text transform="translate(1020 535) rotate(-90)" font-size="7" textLength="45">Cableado por plafon</text><text x="1074" y="639" font-size="7" textLength="45">Cableado por plafon</text><text transform="translate(1068 670) rotate(90)" font-size="5.500" textLength="22">Cableado</text><text transform="translate(1059 676) rotate(90)" font-size="5.500">Con</text><text transform="translate(1050 671) rotate(90)" font-size="5.500" textLength="18">canaleta</text><text x="907" y="836" font-size="4.500" textLength="35">Cableado por tubería</text></g>
  <g class="r" font-size="5.500"><text x="1010" y="620" font-size="6" textLength="13">IMP01</text><text x="1102" y="719" font-size="6" textLength="14">IMP04</text><text x="951" y="587" textLength="23">SWHARD1</text><text x="959" y="595">8P</text><text x="1171" y="588" font-size="4.500" textLength="21">SWREC1 4P</text><text x="864" y="730" font-size="4.500" textLength="17">SWSIS1 8P</text><text x="866" y="688" font-size="4.500" textLength="17">SWSIS 24P</text><text x="869" y="785" font-size="4.500" textLength="17">SWSIS3 8P</text><text x="1013" y="809" font-size="4.500" textLength="18">SWSIS4 8P</text><text x="990" y="784" font-size="4.500" textLength="28">SERV.PRUEBAS</text><text x="1001" y="790" font-size="4.500">8AP</text><text x="1000" y="736" font-size="4.500">PC de</text><text x="997" y="743" font-size="4.500" textLength="16">respaldos</text><text x="1005" y="705" font-size="4.500" textLength="10">SIS05</text><text x="871" y="753" font-size="4.500" textLength="11">DES01</text><text x="932" y="751" font-size="4.500" textLength="11">DES02</text><text x="882" y="826" font-size="4.500" textLength="11">DES03</text><text x="930" y="825" font-size="4.500" textLength="11">DES04</text><text x="833" y="732" font-size="4.500" textLength="9">SIS03</text><text x="900" y="670" font-size="4.500" textLength="9">SIS01</text><text x="950" y="670" font-size="4.500" textLength="9">SIS02</text><text x="991" y="305" font-size="4.500" textLength="10">REC01</text><text x="1117" y="356" font-size="4.500" textLength="10">RH01</text><text x="1123" y="669" font-size="4.500" textLength="12">REC01</text><text x="1134" y="766" font-size="4.500" textLength="12">REC03</text><text transform="translate(1109 426) rotate(-90)" font-size="4.500">RH02</text><text transform="translate(1110 527) rotate(-90)" font-size="4.500">RH03</text></g>

  <!-- comentarios -->
  <g fill="#fff" stroke="#000"><path d="M1039.500 266.500h54v23h-27l-8 8v-8h-19zM905.500 615.500h54v26h-27l-7 9v-9h-20zM1174.500 607.500h55v35h-27l-7 7v-7h-21zM1172.500 726.500h54v26h-27l-6 8v-8h-21z"/><path d="M1080.500 839h159v20.500h-159z" stroke-width="1.300"/></g>
  <g class="c" text-anchor="middle" font-size="4.600"><text x="1066" y="277" textLength="39">Extensión R165 va</text><text x="1066" y="283" textLength="23">por azotea</text><text x="932" y="623" textLength="43">Extensión R161 esta</text><text x="932" y="630" textLength="41">conectada del lado</text><text x="932" y="636" textLength="29">de hard &amp; co.</text><text x="1202" y="616" textLength="38">Se quita equipo y</text><text x="1202" y="623" textLength="37">extensión equipo</text><text x="1202" y="629.500" textLength="47">R188 temporalmente</text><text x="1202" y="636" textLength="46">y se ingresa a oficina</text><text x="1199" y="734" textLength="34">Se quita equipo</text><text x="1199" y="740.500" textLength="14">REC02</text><text x="1199" y="747" textLength="35">temporalmente</text></g>
  <text x="1198" y="852" font-size="10" textLength="37" class="n0">Página 1</text>
</svg>
        </div>
      </div>
      <div class="sbar tall"><b class="up"></b><em></em><b class="dn"></b></div>
    </div>
  </div>
</div>
<script src="drawing.js"></script>
</body>
</html>
```
FILE: styles.css
```css
* { box-sizing: border-box; }
body { margin: 0; background: #262626; font: 11.5px/16px "Open Sans", "Noto Sans", sans-serif; color: #f0f0f0; overflow: hidden; }
.defs { display: block; }
.app { width: 1920px; height: 901px; display: flex; flex-direction: column; overflow: hidden; }
.tabs { height: 11px; flex: none; background: #0a0a0a; display: flex; padding-left: 69px; border-bottom: 1px solid #2a2a2a; }
.tab-on { width: 54px; height: 11px; background: #363636; flex: none; }
.tab-bits { display: block; flex: none; }

.ribbon { height: 94px; flex: none; background: #363636; border-bottom: 2px solid #505050; display: flex; align-items: flex-start; padding-top: 3px; letter-spacing: -.12px; }
.group { height: 85px; margin-top: 1px; border-right: 1px solid #505050; display: flex; flex-direction: column; flex: none; }
.body { height: 69px; display: flex; }
.label { height: 22px; display: flex; align-items: center; margin-bottom: -6px; }
.label span { flex: 1; text-align: center; white-space: nowrap; font-weight: 600; font-size: 11.3px; letter-spacing: -.2px; }
.la { width: 9px; height: 9px; color: #bbb; flex: none; margin: 0 3px 0 4px; }
.la.off { color: #5c5c5c; margin-left: 0; }
.off { color: #5e5e5e; }
.chev { width: 8px; height: 8px; flex: none; color: #ddd; }
.off .chev { color: #5e5e5e; }
.g-clip { width: 168px; padding-left: 5px; }
.g-font { width: 225px; }
.g-par { width: 165px; }
.g-tools { width: 194px; }
.g-style { width: 148px; }
.g-org { width: 232px; }
.g-edit { width: 166px; }
.g-clip .label { margin-left: -5px; }
.g-tools .body { padding-left: 11px; }
.g-style .body { padding-left: 12px; }
.g-org .body { padding-left: 7px; }
.g-edit .body { padding-left: 7px; }
.big { width: 48px; display: flex; flex-direction: column; align-items: center; padding-top: 3px; white-space: nowrap; flex: none; }
.big > svg:first-child { flex: none; }
.big > span { line-height: 16px; }
.big > .chev { margin-top: 3px; }
.big .l2 { display: flex; align-items: center; gap: 3px; }
.g-style .rows { margin-left: 5px; }
.g-edit .big { width: 52px; }
.g-edit .rows { margin-left: 2px; }
.big.b44 { width: 44px; }
.big.b50 { width: 50px; }
.g-org .rows { margin-left: 2px; }
.rows { display: flex; flex-direction: column; margin-top: -2px; }
.row { height: 23px; display: flex; align-items: center; gap: 3px; white-space: nowrap; }
.row > svg { flex: none; }
.row .chev { margin-left: 1px; }
.row .chev.far { margin-left: 5px; }
.row .chev.sp { margin-left: 3px; }
.g4 .row { gap: 4px; letter-spacing: -.2px; }
.r132 { width: 132px; }
.pick { padding-left: 8px; }

.tools { flex-direction: column; padding: 6px 0 0 8px; gap: 8px; }
.tool-row { height: 23px; display: flex; align-items: center; }
.combo { height: 24px; border: 1px solid #6a6a6a; background: #404040; display: flex; align-items: center; justify-content: space-between; padding: 0 4px 1px 3px; font-size: 12px; }
.combo i, .search i { border: 3px solid transparent; border-top: 4px solid #ddd; border-bottom: 0; }
.c1 { width: 107px; margin-right: 2px; }
.c2 { width: 52px; }
.cell { height: 23px; display: flex; align-items: center; justify-content: center; flex: none; }
.sel { background: #505050; }
.gap2 { margin-left: 2px; }
.w5 { width: 5px; } .w8 { width: 8px; } .w12 { width: 12px; } .w14 { width: 14px; } .w16 { width: 16px; }
.w22 { width: 22px; } .w24 { width: 24px; } .w25 { width: 25px; } .w26 { width: 26px; }
.fa { font-size: 15px; color: #ddd; margin-left: 2px; }
.fb { font-size: 13px; color: #ddd; }
.fa svg, .fb svg { align-self: flex-start; margin-top: 3px; }
.gr { color: #ccc; font-size: 12px; }
.fcol { font-size: 13px; line-height: 14px; height: 18px; border-bottom: 4px solid #f4a050; color: #ccc; margin-top: 2px; }
.vsep { width: 1px; height: 21px; background: #5c5c5c; }
.ln { fill: none; stroke: #a8a8a8; stroke-width: 1.5; }
.collapse { margin: 79px 0 0 603px; flex: none; }

.doc { flex: 1; border-left: 1px solid #6c6c6c; border-right: 1px solid #6c6c6c; display: flex; flex-direction: column; min-height: 0; }
.titlebar { height: 30px; flex: none; margin: 0 3px; border-bottom: 2px solid #484848; display: flex; align-items: center; padding: 0 17px 0 9px; gap: 11px; letter-spacing: -.05px; }
.winbtns { margin-left: auto; }
.main { flex: 1; display: flex; min-height: 0; }

.side { width: 265px; flex: none; display: flex; flex-direction: column; padding-left: 9px; color: #dcdcdc; font-size: 11.5px; }
.side-head { display: flex; align-items: center; justify-content: space-between; height: 28px; margin-top: 22px; padding: 0 16px 0 3px; flex: none; }
.side-head svg { margin-top: -4px; }
h1 { margin: 0; font-size: 20px; font-weight: 400; line-height: 28px; letter-spacing: -.4px; }
.search { margin: 19px 0 0 4px; width: 231px; height: 18px; background: #d4d4d4; color: #222; display: flex; align-items: center; padding: 0 3px 0 1px; flex: none; letter-spacing: .05px; }
.search i { border-top-color: #444; margin-left: auto; margin-right: 7px; }
.more { margin: 30px 0 0 2px; display: flex; align-items: center; gap: 16px; height: 16px; letter-spacing: -.1px; flex: none; }
.stencils { display: flex; margin-top: 5px; flex: none; }
ul { list-style: none; margin: 0; padding: 0; width: 228px; }
li { height: 24px; line-height: 23px; padding-left: 2px; white-space: nowrap; letter-spacing: -.12px; }
li.on { background: #243f8f; color: #fff; font-weight: 700; font-size: 11.4px; letter-spacing: -.2px; line-height: 22px; }
.sbar { background: #363636; display: flex; flex-direction: column; align-items: center; flex: none; }
.sbar b { width: 13px; height: 13px; background: #505050; display: flex; align-items: center; justify-content: center; flex: none; }
.sbar b::after { content: ""; border: 4px solid transparent; }
.sbar .up::after { border-bottom: 5px solid #999; border-top: 0; }
.sbar .dn::after { border-top: 5px solid #999; border-bottom: 0; }
.sbar em { width: 13px; background: #505050; }
.small { width: 15px; height: 116px; margin: 1px 0 0 1px; padding: 1px 0; }
.small em { height: 15px; margin: 4px 0 auto; }
.tall { width: 15px; margin: 18px 8px 0 0; padding-top: 1px; }
.tall em { height: 324px; margin: 210px 0 auto; }
.shapes { margin: 5px 0 0; width: 245px; flex: 1; border-top: 2px solid #363636; padding: 6px 1px 0; min-height: 0; display: flex; flex-direction: column; }
.shape-grid { background: #d4d4d4; display: grid; grid-template-columns: 113px 130px; grid-auto-rows: 37.3px; color: #333; padding-top: 3px; letter-spacing: -.02px; }
.shape-grid.top { padding: 2px 0 4px; grid-auto-rows: 37px; }
.shape-grid:last-child { flex: 1; align-content: start; }
.shape { display: flex; align-items: center; padding-left: 5px; gap: 5px; line-height: 15px; }
.shape svg { width: 26px; height: 26px; flex: none; }
.shape .w { fill: #fff; stroke: #111; stroke-width: 1.2; }
.shape .n { fill: none; stroke: #000; stroke-width: 1.2; }
.shape .thick { stroke-width: 2; }
hr { margin: 0; border: 0; height: 2px; width: 243px; flex: none; background: linear-gradient(90deg, #d4d4d4 25px, #888 25px, #888 204px, #d4d4d4 204px); }

.work { width: 1629px; flex: none; display: grid; grid-template-columns: 17px 1612px; grid-template-rows: 18px 732px; margin-top: 16px; }
.work > svg { display: block; overflow: visible; }
.tick { stroke: #a0a0a0; }
.rule { stroke: #444; }
.num { font: 10px "Open Sans", sans-serif; fill: #a4a4a4; }
.vruler .num { font-size: 9.5px; }
.canvas { padding-left: 425px; }
.page { display: block; font-family: "Open Sans", sans-serif; }
.k0, .k { fill: none; stroke: #000; }
rect.k { fill: #fff; }
.d { fill: none; stroke: #333; stroke-width: .9; }
.f { fill: none; stroke: #b2b2b2; stroke-width: .9; }
.b { font-weight: 700; }
.s { font-family: Lato, sans-serif; }
.i { font-family: "Liberation Serif", serif; font-style: italic; }
.r { font-family: "Liberation Serif", serif; }
.c { fill: #222; }
.n0 { font-family: "Noto Sans", sans-serif; fill: #222; }
```
FILE: drawing.js
```js
const NS = "http://www.w3.org/2000/svg";
function add(parent, name, attrs, text) {
  const el = document.createElementNS(NS, name);
  for (const k in attrs) el.setAttribute(k, attrs[k]);
  if (text !== undefined) el.textContent = text;
  parent.appendChild(el);
}
// Horizontal ruler: one unit is 38 px
const h = document.getElementById("hruler");
for (let n = 77; n <= 119; n++) {
  const x = 306.5 + 38 * (n - 78);
  if (n > 77) {
    add(h, "path", { class: "tick", d: `M${x} 152v16` });
    add(h, "text", { class: "num", x: x + 1.5, y: 162, textLength: n > 99 ? 15 : 10.5, lengthAdjust: "spacingAndGlyphs" }, n);
  }
  add(h, "path", { class: "tick", d: `M${x + 19} 157v11` });
}
add(h, "path", { class: "rule", d: "M283 168.500h1612" });
// Vertical ruler
const v = document.getElementById("vruler");
for (let n = 19; n >= 0; n--) {
  const y = 875.5 - 38 * n;
  if (n < 19) {
    add(v, "path", { class: "tick", d: `M266 ${y}h16` });
    add(v, "text", { class: "num", transform: `translate(276 ${y + (n > 9 ? 12 : 8)}) rotate(-90)` }, n);
  }
  add(v, "path", { class: "tick", d: `M271 ${y + 19}h11` });
}
add(v, "path", { class: "rule", d: "M282.500 169v732" });
// Labels on the plan scale their glyphs to the fitted length
for (const t of document.querySelectorAll("#plan text[textLength]")) t.setAttribute("lengthAdjust", "spacingAndGlyphs");
```
